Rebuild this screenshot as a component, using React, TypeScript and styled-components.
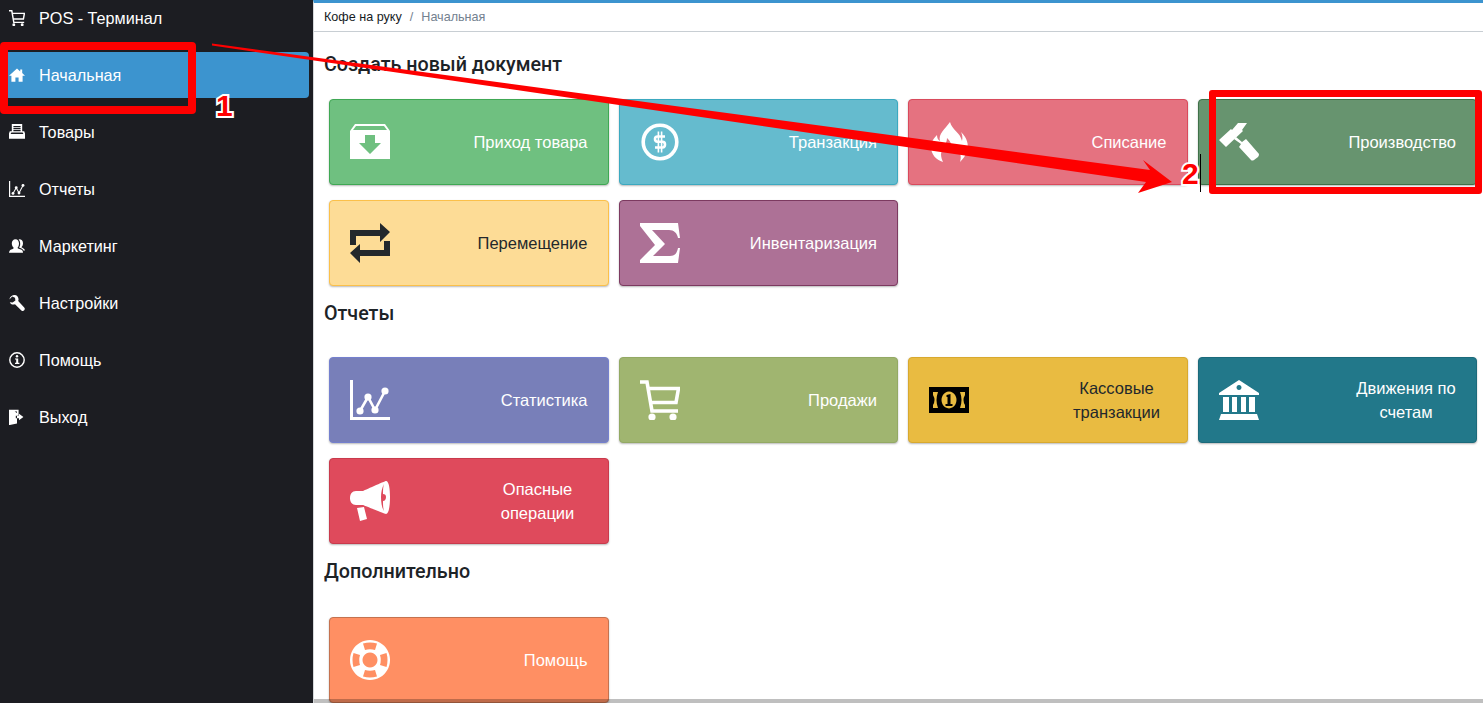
import { ReactNode } from 'react';
import styled, { createGlobalStyle } from 'styled-components';

const Icon = ({ size, children }: { size: number; children: ReactNode }) => (
  <svg width={size} height={size} viewBox="0 0 40 40" fill="currentColor" aria-hidden="true">
    {children}
  </svg>
);

const dot = (cx: number, cy: number, r: number) => <circle cx={cx} cy={cy} r={r} />;

const icons = {
  box: (
    <path
      fillRule="evenodd"
      d="M5 2H35L40 9V37H0V9ZM6 4L3 8H37L34 4ZM15 13V21H9L20 32L31 21H25V13Z"
    />
  ),
  dollar: (
    <>
      <circle cx="20" cy="20" r="16.8" fill="none" stroke="currentColor" strokeWidth="3.6" />
      <path d="M25 14.5H17.5Q15 14.5 15 17T17.5 19.8H22.5Q25 19.8 25 22.6T22.5 25.5H15" fill="none" stroke="currentColor" strokeWidth="2.6" />
      <path d="M17.6 9.5h1.6v21h-1.600zM20.800 9.500h1.600v21h-1.600z" />
    </>
  ),
  fire: (
    <path d="M21 0C23 8 31 10 33 19C34 15 33 12 32 10C38 16 40 22 38 29C37 33 34 37 31 40C33 34 31 29 27 25C27 28 26 30 24 31C25 26 22 20 18 16C18 22 13 26 12 32C12 35 13 38 14 40C7 38 2 32 2 25C2 20 5 16 8 13C8 16 9 18 11 19C9 12 16 7 21 0Z" />
  ),
  hammer: (
    <>
      <path d="M0 18L12 7L13 8L19 1H28L23 8L24 9L7 25Z" />
      <path d="M15 17L17 15L23 20L27 17L40 32Q40 34 39 35L35 38Q33 39 32 38L20 25L22 22Z" />
    </>
  ),
  loop: (
    <path d="M30 0L40 9L30 19V13H6V22H0V7H30ZM10 21V27H34V18H40V33H10V40L0 30Z" />
  ),
  sigma: (
    <path d="M0 0H38L40 15H38C37 10 34 7 29 7H12L25 21L13 33H30C35 33 37 30 38 25H40L38 40H0V37L15 22L0 3Z" />
  ),
  chart: (
    <>
      <path d="M0 0H3V37H40V40H0Z" />
      <path d="M10 31L18 17L25 30L35 11" fill="none" stroke="currentColor" strokeWidth="2.6" />
      {dot(10, 31, 3.6)}
      {dot(18, 17, 3.6)}
      {dot(25, 30, 3.6)}
      {dot(35, 11, 3.6)}
    </>
  ),
  cart: (
    <>
      <path d="M0 2H7L12 31H38" fill="none" stroke="currentColor" strokeWidth="3.6" />
      <path d="M8 8.500H38.500L36 22.500H10" fill="none" stroke="currentColor" strokeWidth="3.6" />
      {dot(12, 37, 3.6)}
      {dot(33, 37, 3.6)}
    </>
  ),
  money: (
    <>
      <path
        fillRule="evenodd"
        d="M0 7H40V33H0ZM4 12V15Q7 20 4 25V28H9Q6 20 9 12ZM36 12H31Q34 20 31 28H36V25Q33 20 36 15ZM20 11.500A7.500 8.500 0 1 0 20.010 11.500Z"
      />
      <path d="M17.500 15L21.500 14V24H23.500V26H16.500V24H18.500V17H17.500Z" />
    </>
  ),
  bank: (
    <path
      fillRule="evenodd"
      d="M20 0L40 13V15H0V13ZM20 5A2.500 2.500 0 1 0 20.010 5ZM4 17H10V32H4ZM13 17H18V32H13ZM22 17H27V32H22ZM30 17H36V32H30ZM2 34H38L40 40H0Z"
    />
  ),
  horn: (
    <path
      fillRule="evenodd"
      d="M36 0C39 0 40 8 40 16S39 33 36 33C35 33 13 24 13 24H6C2 24 0 21 0 17S2 10 6 10H13C13 10 35 0 36 0ZM34 3C32 7 31 11 31 16C31 22 32 27 34 30C33 27 33 23 33 20C35 20 36 18 36 16C36 14 35 13 33 13C33 9 33 6 34 3ZM7 27L14 26L17 38L10 40Z"
    />
  ),
  buoy: (
    <path
      fillRule="evenodd"
      d="M20 0A20 20 0 1 0 20.010 0ZM20 12.500A7.500 7.500 0 1 1 19.990 12.500ZM13 3.500Q20 1.500 27 3.500L25 10Q20 8.500 15 10ZM3.500 13L10 15Q8.500 20 10 25L3.500 27Q1.500 20 3.500 13ZM36.500 13Q38.500 20 36.500 27L30 25Q31.500 20 30 15ZM15 30Q20 31.500 25 30L27 36.500Q20 38.500 13 36.500Z"
    />
  ),
  home: <path d="M20 4L28 11V6H33V15L40 22H34V37H24V26H16V37H6V22H0Z" />,
  tray: (
    <path
      fillRule="evenodd"
      d="M7 0H33V18H38L40 24V37H0V24L2 18H7ZM11 5V8H29V5ZM11 10V13H29V10ZM11 15V18H29V15ZM6 21L4 25H36L34 21Z"
    />
  ),
  people: (
    <path d="M16 3C22 3 25 8 25 14C25 19 23 23 21 25C24 28 32 28 34 32C35 34 35 37 35 37H0C0 35 1 32 3 30C6 28 10 28 12 25C9 22 7 18 7 13C7 8 11 3 16 3ZM26 3C31 3 35 7 35 13C35 18 33 21 31 23C34 25 39 26 40 31H36C34 27 29 26 25 24C28 20 29 15 27 8C26 6 25 5 24 4Z" />
  ),
  wrench: (
    <path d="M14 0C8 0 2 4 1 11L8 4L15 7L16 14L9 19L2 18C4 24 10 25 15 23L31 39C33 41 36 40 38 38C40 36 40 33 38 31L23 15C26 8 21 0 14 0Z" />
  ),
  info: (
    <>
      <circle cx="20" cy="20" r="18" fill="none" stroke="currentColor" strokeWidth="3.6" />
      {dot(20, 10.5, 3)}
      <path d="M15 16H23V27H26V30H15V27H18V19H15Z" />
    </>
  ),
  exit: (
    <path fillRule="evenodd" d="M0 2H24V16H20V6H14L20 10V36L2 40H0ZM25 17V12L36 20L25 28V23H17V17Z" />
  ),
};

type IconName = keyof typeof icons;

const menu: { icon: IconName; label: string; active?: boolean }[] = [
  { icon: 'cart', label: 'POS - Терминал' },
  { icon: 'home', label: 'Начальная', active: true },
  { icon: 'tray', label: 'Товары' },
  { icon: 'chart', label: 'Отчеты' },
  { icon: 'people', label: 'Маркетинг' },
  { icon: 'wrench', label: 'Настройки' },
  { icon: 'info', label: 'Помощь' },
  { icon: 'exit', label: 'Выход' },
];

type CardData = {
  icon: IconName;
  lines: string[];
  bg: string;
  edge: string;
  dark?: boolean;
  iconTone?: string;
};

const documents: CardData[] = [
  { icon: 'box', lines: ['Приход товара'], bg: '#6fc080', edge: '#3fa854' },
  { icon: 'dollar', lines: ['Транзакция'], bg: '#65bbce', edge: '#3ba9c0' },
  { icon: 'fire', lines: ['Списание'], bg: '#e57280', edge: '#d94a5c' },
  { icon: 'hammer', lines: ['Производство'], bg: '#67946f', edge: '#3f7148' },
  { icon: 'loop', lines: ['Перемещение'], bg: '#fddc96', edge: '#fbc04a', dark: true },
  { icon: 'sigma', lines: ['Инвентаризация'], bg: '#ad7196', edge: '#7c3a60' },
];

const reports: CardData[] = [
  { icon: 'chart', lines: ['Статистика'], bg: '#787fb9', edge: '#7480ce' },
  { icon: 'cart', lines: ['Продажи'], bg: '#a0b570', edge: '#93a964' },
  { icon: 'money', lines: ['Кассовые', 'транзакции'], bg: '#e9bb41', edge: '#d8a92f', dark: true, iconTone: '#000' },
  { icon: 'bank', lines: ['Движения по', 'счетам'], bg: '#22788a', edge: '#1b6a7b' },
  { icon: 'horn', lines: ['Опасные', 'операции'], bg: '#df4a5c', edge: '#c93a4c' },
];

const extras: CardData[] = [{ icon: 'buoy', lines: ['Помощь'], bg: '#ff8f63', edge: '#c4724f' }];

function Tile({ card }: { card: CardData }) {
  return (
    <Card $bg={card.bg} $edge={card.edge} $dark={card.dark}>
      <CardIcon $tone={card.iconTone}>
        <Icon size={40}>{icons[card.icon]}</Icon>
      </CardIcon>
      <CardLabel $wrapped={card.lines.length > 1}>
        {card.lines.map(line => (
          <span key={line}>{line}</span>
        ))}
      </CardLabel>
    </Card>
  );
}

export default function App() {
  return (
    <Page>
      <GlobalStyle />
      <Sidebar>
        <Menu>
          {menu.map(item => (
            <MenuItem key={item.label} $active={item.active}>
              <Icon size={16}>{icons[item.icon]}</Icon>
              {item.label}
            </MenuItem>
          ))}
        </Menu>
      </Sidebar>
      <Main>
        <Breadcrumb>
          <span>Кофе на руку</span>
          <Slash>/</Slash>
          <Current>Начальная</Current>
        </Breadcrumb>
        <Content>
          <Heading $top={22} $bottom={23}>Создать новый документ</Heading>
          <Tiles>
            {documents.map(card => (
              <Tile key={card.lines[0]} card={card} />
            ))}
          </Tiles>
          <Heading $top={17} $bottom={32}>Отчеты</Heading>
          <Tiles>
            {reports.map(card => (
              <Tile key={card.lines[0]} card={card} />
            ))}
          </Tiles>
          <Heading $top={17} $bottom={34}>Дополнительно</Heading>
          <Tiles>
            {extras.map(card => (
              <Tile key={card.lines[0]} card={card} />
            ))}
          </Tiles>
        </Content>
        <Scrollbar />
      </Main>

      {/* red markup drawn over the screenshot */}
      <MenuFrame />
      <TileFrame />
      <Caret />
      <Step $x={216} $y={88}>1</Step>
      <Step $x={1182} $y={156}>2</Step>
      <Markup viewBox="0 0 1483 703" width="1483" height="703">
        <polygon points="212,43.500 1150,170 1143,160 1172,182 1138,193 1146,182 212,45.500" fill="#fe0000" />
      </Markup>
    </Page>
  );
}

const GlobalStyle = createGlobalStyle`
  html, body {
    margin: 0;
    padding: 0;
    background: #fff;
    font-family: "Liberation Sans", Arial, sans-serif;
  }
`;

const Page = styled.div`
  position: relative;
  display: flex;
  width: 100%;
  height: 100vh;
  overflow: hidden;
`;

const Sidebar = styled.aside`
  flex: 0 0 313px;
  background: #1c1d22;
  overflow: hidden;
`;

const Menu = styled.nav`
  display: flex;
  flex-direction: column;
  gap: 11px;
  margin-top: -5px;
  padding-right: 4px;
`;

const MenuItem = styled.div<{ $active?: boolean }>`
  display: flex;
  align-items: center;
  gap: 14px;
  height: 46px;
  padding-left: 9px;
  font-size: 16.2px;
  color: #fff;
  background: ${p => (p.$active ? '#3c94cf' : 'transparent')};
  border-radius: 0 4px 4px 0;
`;

const Main = styled.main`
  position: relative;
  flex: 1;
  min-width: 0;
  border-left: 1px solid #d5d8da;
  border-top: 3px solid #3c94cf;
`;

const Breadcrumb = styled.div`
  display: flex;
  align-items: center;
  height: 28px;
  padding-left: 10px;
  font-size: 12.6px;
  color: #151b1e;
  border-bottom: 1px solid #c8ced3;
`;

const Slash = styled.span`
  margin: 0 8px;
  color: #73818f;
`;

const Current = styled.span`
  color: #73818f;
`;

const Content = styled.div`
  padding: 0 6px 0 10px;
`;

const Heading = styled.h2<{ $top: number; $bottom: number }>`
  margin: ${p => p.$top}px 0 ${p => p.$bottom}px;
  font-family: Roboto, "Liberation Sans", sans-serif;
  font-size: 19.7px;
  line-height: 22px;
  font-weight: 500;
  color: #1d2327;
`;

const Tiles = styled.div`
  display: grid;
  grid-template-columns: repeat(4, 1fr);
  gap: 15px 10px;
  margin-left: 5px;
`;

const Card = styled.div<{ $bg: string; $edge: string; $dark?: boolean }>`
  display: flex;
  align-items: center;
  justify-content: space-between;
  box-sizing: border-box;
  height: 86px;
  padding: 0 20px;
  font-size: 16.5px;
  line-height: 24px;
  color: ${p => (p.$dark ? '#23282c' : '#fff')};
  background: ${p => p.$bg};
  border: 1px solid ${p => p.$edge};
  border-radius: 4px;
  box-shadow: 0 1px 2px rgba(0, 0, 0, 0.28);
`;

const CardIcon = styled.div<{ $tone?: string }>`
  display: flex;
  color: ${p => p.$tone ?? 'inherit'};
`;

const CardLabel = styled.div<{ $wrapped?: boolean }>`
  display: flex;
  flex-direction: column;
  align-items: ${p => (p.$wrapped ? 'center' : 'flex-end')};
  width: ${p => (p.$wrapped ? '100px' : 'auto')};
  white-space: nowrap;
`;

const Scrollbar = styled.div`
  position: absolute;
  left: 0;
  right: 0;
  bottom: 0;
  height: 4px;
  background: rgba(0, 0, 0, 0.25);
`;

const MenuFrame = styled.div`
  position: absolute;
  left: 0;
  top: 42px;
  box-sizing: border-box;
  width: 196px;
  height: 72px;
  border: 8px solid #fe0000;
  border-radius: 4px;
`;

const TileFrame = styled.div`
  position: absolute;
  left: 1209px;
  top: 90px;
  box-sizing: border-box;
  width: 273px;
  height: 104px;
  border: 7px solid #fe0000;
  border-radius: 3px;
`;

const Caret = styled.div`
  position: absolute;
  left: 1200px;
  top: 154px;
  width: 1px;
  height: 38px;
  background: #000;
`;

const Step = styled.span<{ $x: number; $y: number }>`
  position: absolute;
  left: ${p => p.$x}px;
  top: ${p => p.$y}px;
  font-size: 30px;
  line-height: 36px;
  font-weight: 700;
  color: #fe0000;
  -webkit-text-stroke: 4px #fff;
  paint-order: stroke fill;
`;

const Markup = styled.svg`
  position: absolute;
  inset: 0;
  pointer-events: none;
`;
